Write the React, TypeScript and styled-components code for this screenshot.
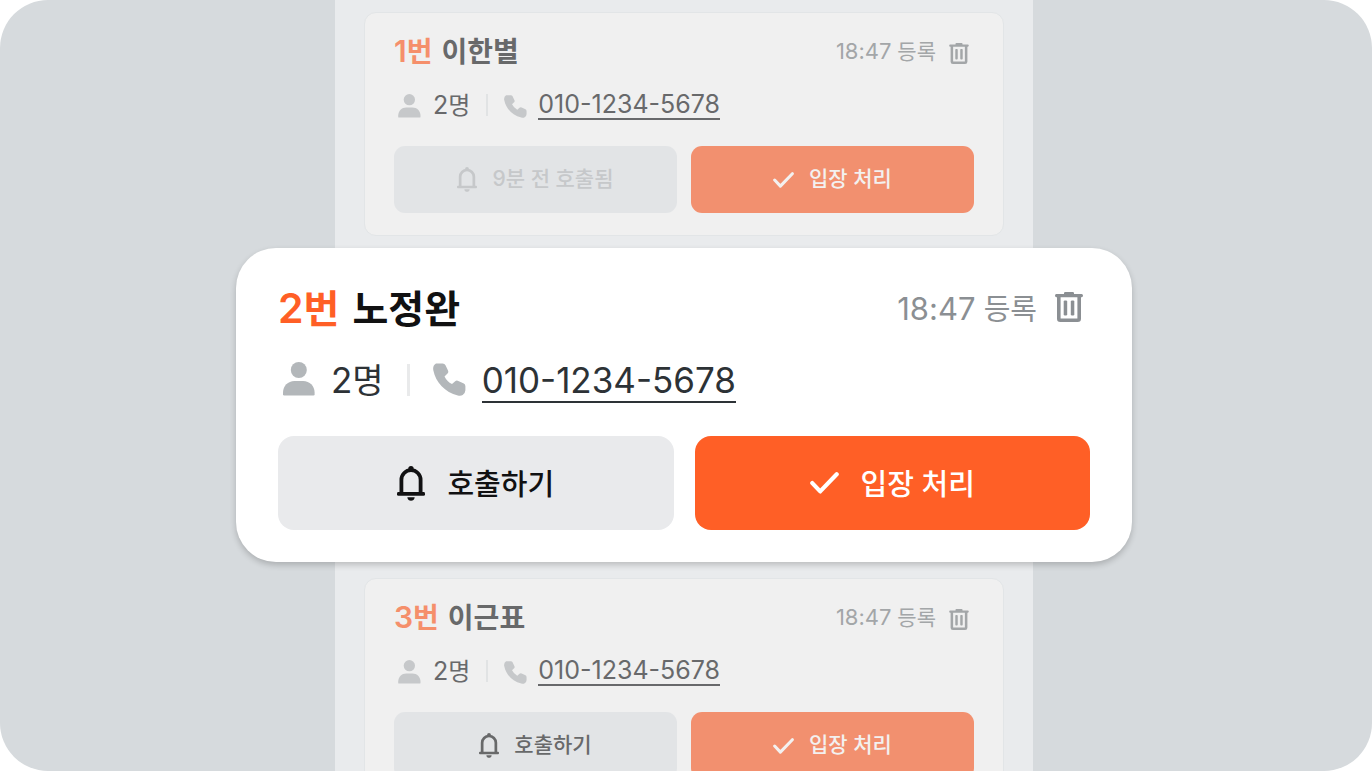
import React from "react";
import styled, { createGlobalStyle, css } from "styled-components";

const GlobalStyle = createGlobalStyle`
  * { box-sizing: border-box; }
  body {
    margin: 0;
    background: #ffffff;
    font-family: Inter, "Noto Sans CJK KR", sans-serif;
  }
`;

type Size = "regular" | "large";

const tokens = {
  regular: {
    title: 28, titleNum: 30, body: 24, bodyNum: 25, meta: 21, metaNum: 22, action: 21,
  },
  large: {
    title: 39, titleNum: 41, body: 34, bodyNum: 35, meta: 29, metaNum: 31, action: 29,
  },
};

const palette = {
  regular: {
    accent: "#f58f6b", name: "#68696a", text: "#68696b", meta: "#a3a6a8",
    icon: "#c6c8ca", divider: "#e1e3e4", call: "#e2e4e6", enter: "#f2906f", onEnter: "#f3f1f0",
    callText: "#68696a",
  },
  large: {
    accent: "#ff5f26", name: "#111112", text: "#2d3236", meta: "#8b8f93",
    icon: "#b3b7ba", divider: "#e9eaeb", call: "#e9eaec", enter: "#ff5f26", onEnter: "#ffffff",
    callText: "#111112",
  },
};

const Stage = styled.main`
  height: calc(100vh - 1px);
  padding-right: 4px;
  overflow: hidden;
  border-radius: 48px;
  background: #d6dadd;
`;

const Panel = styled.ul`
  list-style: none;
  width: 100%;
  max-width: 698px;
  margin: 0 auto;
  padding: 12px 29px;
  background: #e9ebed;
`;

const Card = styled.li<{ $size: Size }>`
  display: flex;
  flex-direction: column;
  ${({ $size }) =>
    $size === "large"
      ? css`
          position: relative;
          margin: 12px -128px 16px;
          padding: 36px 42px 32px;
          border-radius: 40px;
          background: #ffffff;
          box-shadow: 0 3px 6px rgba(0, 0, 0, 0.2);
        `
      : css`
          padding: 18px 29px 22px;
          border: 1px solid #e2e5e7;
          border-radius: 12px;
          background: #f0f0f0;
        `}
`;

const Header = styled.div<{ $size: Size }>`
  display: flex;
  align-items: center;
  justify-content: space-between;
  height: ${({ $size }) => ($size === "large" ? 48 : 40)}px;
`;

const Title = styled.h2<{ $size: Size }>`
  display: flex;
  align-items: baseline;
  gap: ${({ $size }) => ($size === "large" ? 13 : 9)}px;
  margin: 0;
  font-size: ${({ $size }) => tokens[$size].title}px;
  line-height: 1;
  font-weight: 600;
  color: ${({ $size }) => palette[$size].name};
`;

const Order = styled.span<{ $size: Size }>`
  color: ${({ $size }) => palette[$size].accent};
`;

const Digits = styled.span<{ $px: number }>`
  font-size: ${({ $px }) => $px}px;
`;

const Registered = styled.div<{ $size: Size }>`
  display: flex;
  align-items: center;
  gap: ${({ $size }) => ($size === "large" ? 18 : 13)}px;
  padding-right: ${({ $size }) => ($size === "large" ? 7 : 5)}px;
  font-size: ${({ $size }) => tokens[$size].meta}px;
  line-height: 1;
  color: ${({ $size }) => palette[$size].meta};
`;

const IconButton = styled.button<{ $size: Size }>`
  display: flex;
  padding: ${({ $size }) => ($size === "large" ? "0 0 2px" : "4px 0 0")};
  border: 0;
  background: none;
  color: inherit;
  cursor: pointer;
`;

const Contact = styled.div<{ $size: Size }>`
  display: flex;
  align-items: center;
  height: ${({ $size }) => ($size === "large" ? 48 : 36)}px;
  margin: ${({ $size }) => ($size === "large" ? "24px 0 32px 5px" : "16px 0 23px 4px")};
  font-size: ${({ $size }) => tokens[$size].body}px;
  line-height: 1;
  color: ${({ $size }) => palette[$size].text};
  svg {
    margin: ${({ $size }) => ($size === "large" ? "0 0 2px" : "2px 0 0")};
    color: ${({ $size }) => palette[$size].icon};
  }
`;

const Party = styled.span<{ $size: Size }>`
  margin-left: ${({ $size }) => ($size === "large" ? 16 : 12)}px;
`;

const Divider = styled.span<{ $size: Size }>`
  width: ${({ $size }) => ($size === "large" ? 3 : 2)}px;
  height: ${({ $size }) => ($size === "large" ? 32 : 22)}px;
  margin: ${({ $size }) => ($size === "large" ? "0 23px" : "0 16px")};
  background: ${({ $size }) => palette[$size].divider};
`;

const PhoneLink = styled.a<{ $size: Size }>`
  margin-left: ${({ $size }) => ($size === "large" ? 16 : 11)}px;
  padding: ${({ $size }) => ($size === "large" ? "5px 0 3px" : "2px 0 1px")};
  border-bottom: 2px solid currentColor;
  font-size: ${({ $size }) => tokens[$size].bodyNum}px;
  color: inherit;
  text-decoration: none;
`;

const Actions = styled.div<{ $size: Size }>`
  display: grid;
  grid-template-columns: 1fr 1fr;
  gap: ${({ $size }) => ($size === "large" ? 21 : 14)}px;
`;

const Action = styled.button<{ $size: Size; $kind: "call" | "enter" }>`
  display: flex;
  align-items: center;
  justify-content: center;
  gap: ${({ $size }) => ($size === "large" ? 22 : 15)}px;
  height: ${({ $size }) => ($size === "large" ? 94 : 67)}px;
  padding: 0;
  border: 0;
  border-radius: ${({ $size }) => ($size === "large" ? 16 : 11)}px;
  background: ${({ $size, $kind }) => palette[$size][$kind]};
  color: ${({ $size, $kind }) => ($kind === "enter" ? palette[$size].onEnter : palette[$size].callText)};
  font-family: inherit;
  font-size: ${({ $size }) => tokens[$size].action}px;
  font-weight: 500;
  line-height: 1;
  cursor: pointer;
  &:disabled {
    color: #c6c8ca;
    cursor: default;
  }
`;

const ActionLabel = styled.span<{ $size: Size }>`
  padding: ${({ $size }) => ($size === "large" ? "3px 0 0" : "0 0 3px")};
`;

interface IconProps { size: Size }
const dims = (w: number, h: number, size: Size) =>
  size === "large" ? { width: w, height: h } : { width: Math.round(w * 0.71), height: Math.round(h * 0.71) };

const TrashIcon = ({ size }: IconProps) => (
  <svg viewBox="0 0 28 30" {...dims(28, 30, size)} fill="currentColor" aria-hidden="true">
    <path d="M9 2V1.2Q9 0 10.2 0h7.6Q19 0 19 1.2V2h7.6Q28 2 28 3.6T26.6 5.3H1.4Q0 5.3 0 3.6T1.4 2z" />
    <path d="M3.8 4v22.7q0 1.5 1.5 1.5h17.4q1.5 0 1.5-1.5V4" fill="none" stroke="currentColor" strokeWidth="3.6" />
    <rect x="8.7" y="8.4" width="3.5" height="15" rx="1.2" />
    <rect x="15.8" y="8.4" width="3.5" height="15" rx="1.2" />
  </svg>
);

const PersonIcon = ({ size }: IconProps) => (
  <svg viewBox="0 0 32 34" {...dims(32, 34, size)} fill="currentColor" aria-hidden="true">
    <circle cx="15.8" cy="8" r="8" />
    <path d="M1.2 33.4Q0 33.4 0 32.2V30.5C0 24 5 19 11.4 19h8.8c6.4 0 11.4 5 11.4 11.5v1.7q0 1.2-1.2 1.2z" />
  </svg>
);

const PhoneIcon = ({ size }: IconProps) => (
  <svg viewBox="0 0 33 33" {...dims(33, 33, size)} fill="currentColor" aria-hidden="true">
    <path d="M3 .4H9.6Q11.7 .4 12.5 2.2L15 7.4Q15.8 9.2 14.5 10.5L11.5 13.4Q13.9 18.3 19 21.1L22.2 18.3Q23.5 17 25.3 17.9L30.8 20.5Q32.4 21.3 32.4 23.2V27.2Q32.2 30.4 29.7 31.9Q27.8 33.1 24.8 32.4C12 29.4 2.8 19.7 .3 7.3Q-.5 2.4 3 .4z" />
  </svg>
);

const BellIcon = ({ size }: IconProps) => (
  <svg viewBox="0 0 28 35" {...dims(28, 35, size)} fill="currentColor" aria-hidden="true">
    <circle cx="14" cy="2.8" r="2.7" />
    <path d="M4.4 28V13.8a9.6 9.6 0 0 1 19.2 0V28" fill="none" stroke="currentColor" strokeWidth="3.8" />
    <rect x="0" y="26.1" width="28" height="3.7" rx="1.4" />
    <path d="M10.3 31.2h7.4C17.4 36 10.6 36 10.3 31.2z" />
  </svg>
);

const CheckIcon = ({ size }: IconProps) => (
  <svg viewBox="0 0 29 22" {...dims(29, 22, size)} fill="none" stroke="currentColor" strokeWidth="4.2" strokeLinecap="round" strokeLinejoin="round" aria-hidden="true">
    <path d="M2.3 11.1L10.2 19.4L26.7 2.3" />
  </svg>
);

interface Guest {
  order: number;
  name: string;
  party: number;
  phone: string;
  time: string;
  called?: { minutes: number };
}

const guests: Guest[] = [
  { order: 1, name: "이한별", party: 2, phone: "010-1234-5678", time: "18:47", called: { minutes: 9 } },
  { order: 2, name: "노정완", party: 2, phone: "010-1234-5678", time: "18:47" },
  { order: 3, name: "이근표", party: 2, phone: "010-1234-5678", time: "18:47" },
];

function GuestCard({ guest, size }: { guest: Guest; size: Size }) {
  const t = tokens[size];
  return (
    <Card $size={size}>
      <Header $size={size}>
        <Title $size={size}>
          <Order $size={size}>
            <Digits $px={t.titleNum}>{guest.order}</Digits>번
          </Order>
          <span>{guest.name}</span>
        </Title>
        <Registered $size={size}>
          <span>
            <Digits $px={t.metaNum}>{guest.time}</Digits> 등록
          </span>
          <IconButton type="button" $size={size} aria-label="삭제">
            <TrashIcon size={size} />
          </IconButton>
        </Registered>
      </Header>
      <Contact $size={size}>
        <PersonIcon size={size} />
        <Party $size={size}>
          <Digits $px={t.bodyNum}>{guest.party}</Digits>명
        </Party>
        <Divider $size={size} />
        <PhoneIcon size={size} />
        <PhoneLink $size={size} href={`tel:${guest.phone}`}>{guest.phone}</PhoneLink>
      </Contact>
      <Actions $size={size}>
        <Action type="button" $size={size} $kind="call" disabled={Boolean(guest.called)}>
          <BellIcon size={size} />
          <ActionLabel $size={size}>
            {guest.called ? `${guest.called.minutes}분 전 호출됨` : "호출하기"}
          </ActionLabel>
        </Action>
        <Action type="button" $size={size} $kind="enter">
          <CheckIcon size={size} />
          <ActionLabel $size={size}>입장 처리</ActionLabel>
        </Action>
      </Actions>
    </Card>
  );
}

export default function App() {
  return (
    <>
      <GlobalStyle />
      <Stage>
        <Panel>
          {guests.map((guest) => (
            <GuestCard key={guest.order} guest={guest} size={guest.order === 2 ? "large" : "regular"} />
          ))}
        </Panel>
      </Stage>
    </>
  );
}
